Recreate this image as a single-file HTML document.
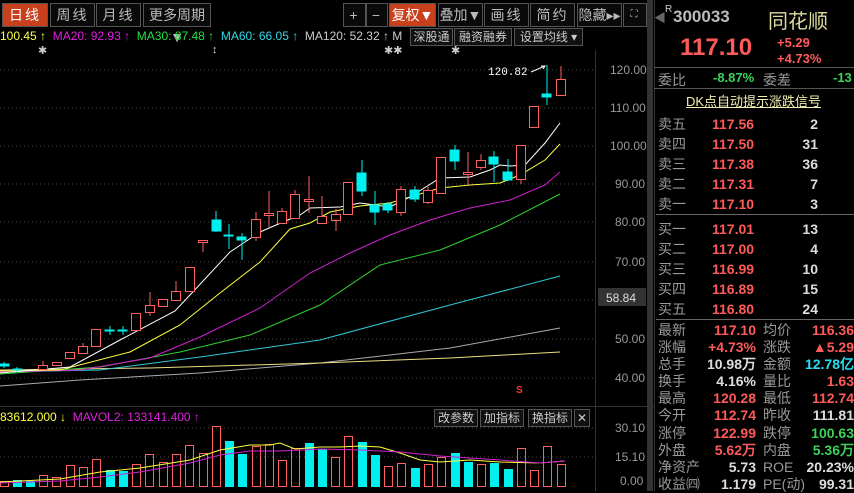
<!DOCTYPE html>
<html><head><meta charset="utf-8"><style>
*{margin:0;padding:0;box-sizing:border-box}
body{width:854px;height:491px;background:#000;overflow:hidden;position:relative;font-family:"Liberation Sans","Noto Sans CJK SC",sans-serif;color:#ccc}
.a{position:absolute;white-space:nowrap}
.btn{position:absolute;top:3px;height:24px;border:1px solid #555;background:#0a0a0a;color:#bbb;font-size:14px;line-height:22px;text-align:center;letter-spacing:2px}
.on{background:#c8401c;color:#fff}
.sb{position:absolute;border:1px solid #555;background:#111;color:#ccc;font-size:12px;line-height:16px;height:18px;text-align:center}
.lb{font-size:14px;color:#999}
.r{color:#ff5a5a}.g{color:#3cd25a}.w{color:#ddd}.c{color:#28e0f0}
.num{font-family:"Liberation Sans",sans-serif;font-size:14px;font-weight:bold}
</style></head><body>
<div class="btn on" style="left:2px;width:46px">日线</div>
<div class="btn" style="left:50px;width:45px">周线</div>
<div class="btn" style="left:96px;width:45px">月线</div>
<div class="btn" style="left:143px;width:68px;letter-spacing:0">更多周期▼</div>
<div class="btn" style="left:343px;width:23px">+</div>
<div class="btn" style="left:366px;width:22px">−</div>
<div class="btn on" style="left:389px;width:47px;letter-spacing:0">复权▼</div>
<div class="btn" style="left:438px;width:45px;letter-spacing:0">叠加▼</div>
<div class="btn" style="left:484px;width:45px">画线</div>
<div class="btn" style="left:530px;width:45px">简约</div>
<div class="btn" style="left:577px;width:45px;letter-spacing:0">隐藏▸▸</div>
<div class="btn" style="left:623px;width:24px;font-size:10px">⛶</div>

<div class="a" style="top:29px;left:0;font-size:12px;line-height:14px">
<span style="color:#ffff40">100.45 ↑</span>&nbsp; <span style="color:#e020e0">MA20: 92.93 ↑</span>&nbsp; <span style="color:#20e040">MA30: 87.48 ↑</span>&nbsp; <span style="color:#30d8e8">MA60: 66.05 ↑</span>&nbsp; <span style="color:#ccc">MA120: 52.32 ↑ M</span></div>
<div class="sb" style="left:410px;top:28px;width:43px">深股通</div>
<div class="sb" style="left:454px;top:28px;width:58px">融资融券</div>
<div class="sb" style="left:514px;top:28px;width:69px">设置均线 ▾</div>
<div class="a" style="top:44px;left:38px;font-size:11px;color:#ccc">✱</div>
<div class="a" style="top:44px;left:212px;font-size:11px;color:#ccc">↕</div>
<div class="a" style="top:44px;left:384px;font-size:11px;color:#ccc">✱✱</div>
<div class="a" style="top:44px;left:451px;font-size:11px;color:#ccc">✱</div>

<svg class="a" style="left:0;top:0" width="654" height="491">
<g stroke="#4a4a4a" stroke-dasharray="1 3" stroke-width="1">
<line x1="0" y1="70" x2="595" y2="70"/><line x1="0" y1="108" x2="595" y2="108"/><line x1="0" y1="146" x2="595" y2="146"/><line x1="0" y1="184" x2="595" y2="184"/><line x1="0" y1="222" x2="595" y2="222"/><line x1="0" y1="262" x2="595" y2="262"/><line x1="0" y1="300" x2="595" y2="300"/><line x1="0" y1="339" x2="595" y2="339"/><line x1="0" y1="378" x2="595" y2="378"/>
<line x1="0" y1="428" x2="595" y2="428"/><line x1="0" y1="457" x2="595" y2="457"/>
</g>
<line x1="595.5" y1="50" x2="595.5" y2="491" stroke="#333"/>
<line x1="0" y1="406.5" x2="654" y2="406.5" stroke="#333"/>
<rect x="647" y="0" width="6" height="491" fill="#333"/>
<rect x="598" y="288" width="48" height="18" fill="#333"/>
<g font-size="12" fill="#999" font-family="Liberation Sans">
<text x="610" y="74">120.00</text><text x="610" y="112">110.00</text><text x="610" y="150">100.00</text><text x="615" y="188">90.00</text><text x="615" y="226">80.00</text><text x="615" y="266">70.00</text><text x="615" y="343">50.00</text><text x="615" y="382">40.00</text>
<text x="606" y="302" fill="#ddd">58.84</text>
<text x="615" y="432">30.10</text><text x="615" y="461">15.10</text><text x="620" y="485">0.00</text>
</g>
<text x="488" y="75" font-size="11" fill="#fff" font-family="Liberation Mono">120.82</text>
<path d="M531 72 L545 66 M541 66 L545 66 L543 69" stroke="#fff" fill="none"/>
<text x="516" y="393" font-size="10" fill="#f33" font-weight="bold">S</text>
<g fill="none" stroke-width="1">
<polyline stroke="#aaa" points="0,386 80,380 200,373 320,363 450,348 560,328"/>
<polyline stroke="#eee080" points="0,370 150,368 320,363 450,358 560,352"/>
<polyline stroke="#30c8d8" points="0,372 100,370 200,357 320,340 450,305 560,276"/>
<polyline stroke="#30d030" points="0,374 100,367 180,352 250,335 320,305 380,265 440,250 500,225 560,194"/>
<polyline stroke="#d020d0" points="0,372 80,370 150,358 200,337 260,308 310,273 350,253 390,235 430,220 470,208 510,200 545,185 560,172"/>
<polyline stroke="#ffff40" points="0,371 60,370 130,352 180,325 220,293 260,262 290,229 310,223 330,212 360,206 390,203 440,188 470,185 500,183 520,175 545,160 560,144"/>
<polyline stroke="#fff" points="0,373 70,367 120,340 175,311 190,295 230,252 260,232 283,222 300,215 310,208 340,207 360,203 390,207 410,197 440,178 470,177 490,170 500,165 510,166 525,165 545,143 560,123"/>
</g>
<g stroke-width="1">
<g stroke="#ff6060" fill="#000">
<line x1="43" y1="361" x2="43" y2="370"/><rect x="38.5" y="365.5" width="9" height="4"/>
<rect x="52.5" y="362.5" width="9" height="3"/>
<rect x="65.5" y="352.5" width="9" height="6"/>
<line x1="83" y1="343" x2="83" y2="353"/><rect x="78.5" y="346.5" width="9" height="7"/>
<rect x="91.5" y="329.5" width="9" height="17"/>
<rect x="131.5" y="313.5" width="9" height="17"/>
<line x1="150" y1="292" x2="150" y2="316"/><rect x="145.5" y="305.5" width="9" height="7"/>
<rect x="158.5" y="299.5" width="9" height="7"/>
<line x1="176" y1="281" x2="176" y2="291"/><rect x="171.5" y="291.5" width="9" height="9"/>
<rect x="185.5" y="267.5" width="9" height="24"/>
<line x1="203" y1="240" x2="203" y2="252"/><rect x="198.5" y="240.5" width="9" height="2"/>
<line x1="256" y1="212" x2="256" y2="241"/><rect x="251.5" y="219.5" width="9" height="18"/>
<line x1="269" y1="191" x2="269" y2="227"/><rect x="264.5" y="213.5" width="9" height="2"/>
<line x1="282" y1="208" x2="282" y2="223"/><rect x="277.5" y="211.5" width="9" height="12"/>
<line x1="295" y1="190" x2="295" y2="218"/><rect x="290.5" y="194.5" width="9" height="24"/>
<line x1="309" y1="176" x2="309" y2="213"/><rect x="304.5" y="199.5" width="9" height="2"/>
<line x1="322" y1="196" x2="322" y2="224"/><rect x="317.5" y="216.5" width="9" height="7"/>
<line x1="336" y1="209" x2="336" y2="231"/><rect x="331.5" y="214.5" width="9" height="6"/>
<rect x="343.5" y="182.5" width="9" height="32"/>
<line x1="401" y1="186" x2="401" y2="216"/><rect x="396.5" y="189.5" width="9" height="23"/>
<line x1="428" y1="187" x2="428" y2="204"/><rect x="423.5" y="190.5" width="9" height="12"/>
<rect x="436.5" y="157.5" width="9" height="36"/>
<line x1="468" y1="152" x2="468" y2="186"/><rect x="463.5" y="172.5" width="9" height="2"/>
<line x1="481" y1="154" x2="481" y2="170"/><rect x="476.5" y="160.5" width="9" height="7"/>
<line x1="521" y1="179" x2="521" y2="184"/><rect x="516.5" y="145.5" width="9" height="34"/>
<rect x="529.5" y="106.5" width="9" height="21"/>
<line x1="561" y1="66" x2="561" y2="79"/><rect x="556.5" y="79.5" width="9" height="16"/>
</g>
<g stroke="#00f0f0" fill="#00f0f0">
<line x1="4" y1="362" x2="4" y2="368"/><rect x="0" y="364" width="9" height="2"/>
<line x1="17" y1="367" x2="17" y2="372"/><rect x="13" y="369" width="9" height="1"/>
<line x1="110" y1="326" x2="110" y2="335"/><rect x="105" y="330" width="9" height="1"/>
<line x1="123" y1="326" x2="123" y2="335"/><rect x="118" y="330" width="9" height="1"/>
<line x1="216" y1="211" x2="216" y2="232"/><rect x="212" y="220" width="9" height="11"/>
<line x1="229" y1="224" x2="229" y2="249"/><rect x="224" y="235" width="9" height="1"/>
<line x1="242" y1="233" x2="242" y2="260"/><rect x="237" y="237" width="9" height="3"/>
<line x1="362" y1="160" x2="362" y2="196"/><rect x="357" y="173" width="9" height="18"/>
<line x1="375" y1="191" x2="375" y2="225"/><rect x="370" y="205" width="9" height="7"/>
<line x1="388" y1="202" x2="388" y2="213"/><rect x="383" y="204" width="9" height="6"/>
<line x1="415" y1="186" x2="415" y2="202"/><rect x="410" y="190" width="9" height="9"/>
<line x1="455" y1="145" x2="455" y2="170"/><rect x="450" y="150" width="9" height="11"/>
<line x1="494" y1="151" x2="494" y2="182"/><rect x="489" y="157" width="9" height="7"/>
<line x1="508" y1="159" x2="508" y2="181"/><rect x="503" y="172" width="9" height="8"/>
<line x1="547" y1="65" x2="547" y2="105"/><rect x="542" y="94" width="9" height="3"/>
</g>
</g>
<g stroke="#ff6060" fill="none">
<rect x="0.5" y="481.5" width="8" height="5"/><rect x="39.5" y="475.5" width="8" height="11"/><rect x="52.5" y="477.5" width="8" height="9"/><rect x="66.5" y="465.5" width="8" height="21"/><rect x="79.5" y="467.5" width="8" height="19"/><rect x="92.5" y="459.5" width="8" height="27"/><rect x="132.5" y="464.5" width="8" height="22"/><rect x="145.5" y="454.5" width="8" height="32"/><rect x="159.5" y="462.5" width="8" height="24"/><rect x="172.5" y="454.5" width="8" height="32"/><rect x="185.5" y="445.5" width="8" height="41"/><rect x="199.5" y="453.5" width="8" height="33"/><rect x="212.5" y="426.5" width="8" height="60"/><rect x="252.5" y="446.5" width="8" height="40"/><rect x="265.5" y="444.5" width="8" height="42"/><rect x="278.5" y="460.5" width="8" height="26"/><rect x="291.5" y="448.5" width="8" height="38"/><rect x="331.5" y="457.5" width="8" height="29"/><rect x="344.5" y="436.5" width="8" height="50"/><rect x="384.5" y="466.5" width="8" height="20"/><rect x="397.5" y="463.5" width="8" height="23"/><rect x="424.5" y="464.5" width="8" height="22"/><rect x="437.5" y="457.5" width="8" height="29"/><rect x="477.5" y="464.5" width="8" height="22"/><rect x="517.5" y="448.5" width="8" height="38"/><rect x="530.5" y="470.5" width="8" height="16"/><rect x="543.5" y="446.5" width="8" height="40"/><rect x="557.5" y="464.5" width="8" height="22"/>
</g>
<g fill="#00f0f0">
<rect x="13" y="480" width="9" height="7"/><rect x="26" y="481" width="9" height="6"/><rect x="106" y="470" width="9" height="17"/><rect x="119" y="471" width="9" height="16"/><rect x="225" y="441" width="9" height="46"/><rect x="238" y="454" width="9" height="33"/><rect x="305" y="443" width="9" height="44"/><rect x="318" y="449" width="9" height="38"/><rect x="358" y="442" width="9" height="45"/><rect x="371" y="455" width="9" height="32"/><rect x="411" y="468" width="9" height="19"/><rect x="451" y="453" width="9" height="34"/><rect x="464" y="462" width="9" height="25"/><rect x="490" y="463" width="9" height="24"/><rect x="504" y="469" width="9" height="18"/>
</g>
<polyline fill="none" stroke="#ffff40" points="0,482 60,479 100,472 140,468 190,460 220,450 250,445 270,445 280,443 295,449 320,447 340,447 360,446 380,447 400,453 420,460 440,462 470,460 500,462 540,463 565,461"/>
<polyline fill="none" stroke="#d020d0" points="0,483 60,481 100,477 140,472 190,463 220,455 250,451 280,451 320,449 360,450 400,452 440,456 470,458 500,460 540,463 565,461"/>
</svg>
<div class="a" style="top:410px;left:0;font-size:12px"><span style="color:#ffff40">83612.000 ↓</span>&nbsp; <span style="color:#e020e0">MAVOL2: 133141.400 ↑</span></div>
<div class="sb" style="left:434px;top:409px;width:44px">改参数</div>
<div class="sb" style="left:480px;top:409px;width:44px">加指标</div>
<div class="sb" style="left:528px;top:409px;width:44px">换指标</div>
<div class="sb" style="left:574px;top:409px;width:16px">✕</div>

<div class="a" style="left:654px;top:0;width:200px;height:491px;border-left:1px solid #333"></div>
<div class="a" style="left:654px;top:9px;color:#666;font-size:12px">◀</div>
<div class="a" style="left:665px;top:4px;font-size:10px;color:#ccc">R</div>
<div class="a" style="left:673px;top:7px;font-size:17px;font-weight:bold;color:#bbb">300033</div>
<div class="a" style="left:768px;top:5px;font-size:20px;color:#dcdca0">同花顺</div>
<div class="a" style="left:680px;top:34px;font-size:24px;font-weight:bold;color:#ff5a5a;font-family:'Liberation Sans'">117.10</div>
<div class="a num r" style="left:777px;top:35px;font-size:13px">+5.29</div>
<div class="a num r" style="left:777px;top:51px;font-size:13px">+4.73%</div>
<div class="a" style="left:654px;top:67px;width:200px;border-top:1px solid #555"></div>
<div class="a lb" style="left:658px;top:70px">委比</div>
<div class="a num g" style="left:713px;top:70px;font-size:13px">-8.87%</div>
<div class="a lb" style="left:763px;top:70px">委差</div>
<div class="a num g" style="left:833px;top:70px;font-size:13px">-13</div>
<div class="a" style="left:654px;top:88px;width:200px;border-top:1px solid #555"></div>
<div class="a" style="left:686px;top:91px;font-size:13px;color:#f0f0b0;text-decoration:underline">DK点自动提示涨跌信号</div>
<div class="a" style="left:658px;top:114px;line-height:20px;font-size:14px;color:#999">卖五<br>卖四<br>卖三<br>卖二<br>卖一</div>
<div class="a num r" style="left:712px;top:114px;line-height:20px">117.56<br>117.50<br>117.38<br>117.31<br>117.10</div>
<div class="a num w" style="left:780px;top:114px;line-height:20px;width:38px;text-align:right">2<br>31<br>36<br>7<br>3</div>
<div class="a" style="left:656px;top:214px;width:198px;border-top:1px solid #666"></div>
<div class="a" style="left:658px;top:219px;line-height:20px;font-size:14px;color:#999">买一<br>买二<br>买三<br>买四<br>买五</div>
<div class="a num r" style="left:712px;top:219px;line-height:20px">117.01<br>117.00<br>116.99<br>116.89<br>116.80</div>
<div class="a num w" style="left:780px;top:219px;line-height:20px;width:38px;text-align:right">13<br>4<br>10<br>15<br>24</div>
<div class="a" style="left:656px;top:319px;width:198px;border-top:1px solid #666"></div>
<div class="a" style="left:658px;top:322px;line-height:17.1px;font-size:14px;color:#999">最新<br>涨幅<br>总手<br>换手<br>最高<br>今开<br>涨停<br>外盘<br>净资产<br>收益㈣</div>
<div class="a num" style="left:680px;top:322px;line-height:17.1px;width:76px;text-align:right"><span class="r">117.10</span><br><span class="r">+4.73%</span><br><span class="w">10.98万</span><br><span class="w">4.16%</span><br><span class="r">120.28</span><br><span class="r">112.74</span><br><span class="r">122.99</span><br><span class="r">5.62万</span><br><span class="w">5.73</span><br><span class="w">1.179</span></div>
<div class="a" style="left:763px;top:322px;line-height:17.1px;font-size:14px;color:#999">均价<br>涨跌<br>金额<br>量比<br>最低<br>昨收<br>跌停<br>内盘<br>ROE<br>PE(动)</div>
<div class="a num" style="left:780px;top:322px;line-height:17.1px;width:74px;text-align:right"><span class="r">116.36</span><br><span class="r">▲5.29</span><br><span class="c">12.78亿</span><br><span class="r">1.63</span><br><span class="r">112.74</span><br><span class="w">111.81</span><br><span class="g">100.63</span><br><span class="g">5.36万</span><br><span class="w">20.23%</span><br><span class="w">99.31</span></div>
</body></html>
